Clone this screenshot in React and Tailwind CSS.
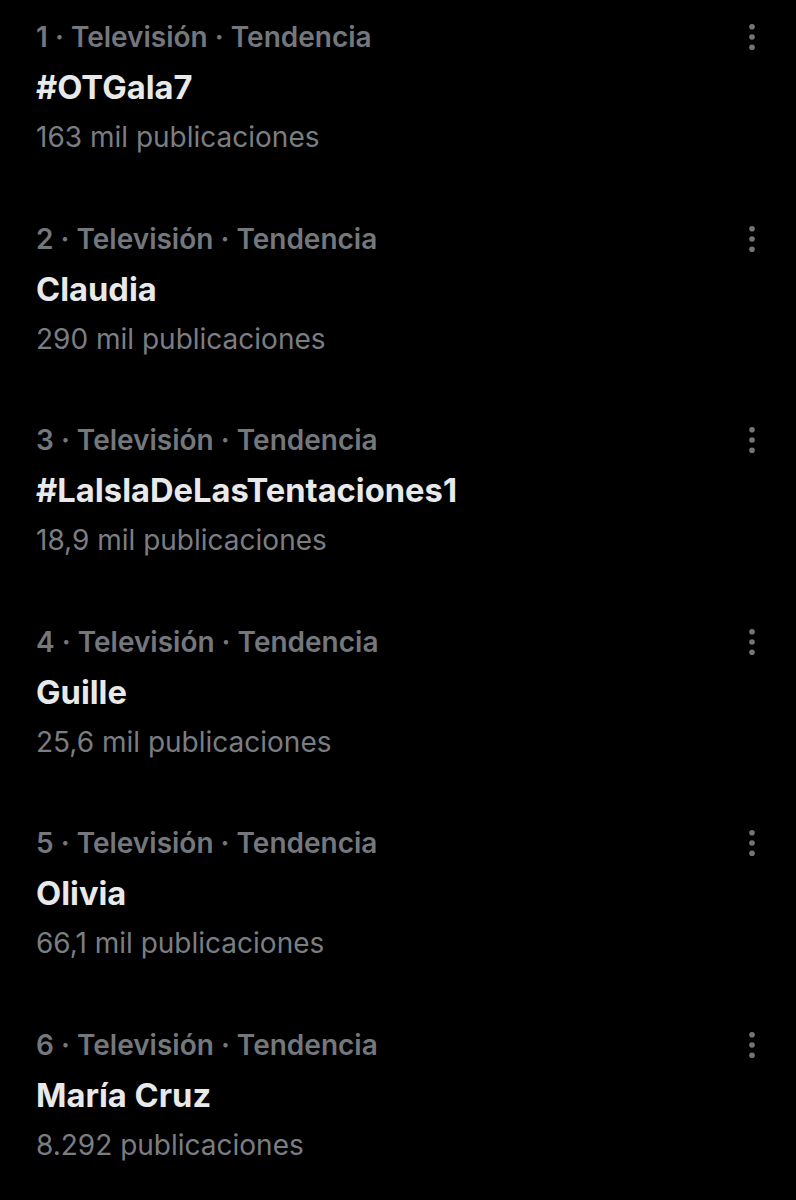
const trends = [
  { rank: 1, name: "#OTGala7", count: "163 mil publicaciones" },
  { rank: 2, name: "Claudia", count: "290 mil publicaciones" },
  { rank: 3, name: "#LaIslaDeLasTentaciones1", count: "18,9 mil publicaciones" },
  { rank: 4, name: "Guille", count: "25,6 mil publicaciones" },
  { rank: 5, name: "Olivia", count: "66,1 mil publicaciones" },
  { rank: 6, name: "María Cruz", count: "8.292 publicaciones" },
];

function MoreIcon() {
  return (
    <svg width="8" height="28" viewBox="0 0 8 28" className="text-[#71767b]">
      <circle cx="4" cy="3.7" r="2.8" fill="currentColor" />
      <circle cx="4" cy="14" r="2.8" fill="currentColor" />
      <circle cx="4" cy="24.3" r="2.8" fill="currentColor" />
    </svg>
  );
}

function TrendRow({ rank, name, count }) {
  return (
    <div className="relative pl-9 pr-10 pt-[11px] pb-[39.6px]">
      <div className="font-semibold text-[28px] leading-[52px] text-[#74787d]">
        {rank} · Televisión · Tendencia
      </div>
      <div className="font-bold text-[32.7px] leading-[49px] text-[#e7e9ea]">{name}</div>
      <div className="text-[28px] leading-[50px] text-[#7a7e83]">{count}</div>
      <button className="absolute right-10 top-[23px]">
        <MoreIcon />
      </button>
    </div>
  );
}

export default function App() {
  return (
    <div className="min-h-screen bg-black font-['Inter',sans-serif] overflow-hidden h-[1200px]">
      {trends.map((t) => (
        <TrendRow key={t.rank} {...t} />
      ))}
    </div>
  );
}
